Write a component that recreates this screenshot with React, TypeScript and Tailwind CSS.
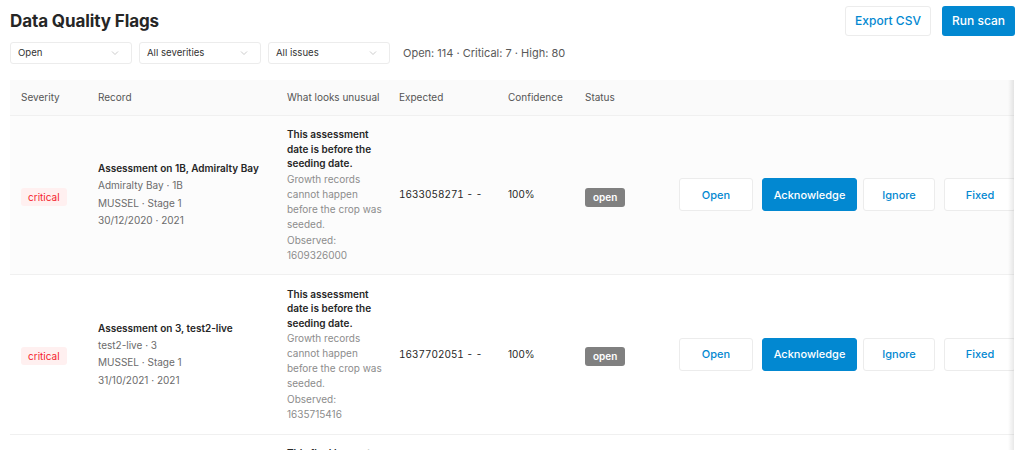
import React from "react";

type Flag = {
  title: string;
  site: string;
  stage: string;
  date: string;
  headline: string;
  detail: string;
  observed: string;
  expected: string;
  confidence: string;
  hovered?: boolean;
};

const flags: Flag[] = [
  {
    title: "Assessment on 1B, Admiralty Bay",
    site: "Admiralty Bay · 1B",
    stage: "MUSSEL · Stage 1",
    date: "30/12/2020 · 2021",
    headline: "This assessment date is before the seeding date.",
    detail: "Growth records cannot happen before the crop was seeded.",
    observed: "1609326000",
    expected: "1633058271 - -",
    confidence: "100%",
    hovered: true,
  },
  {
    title: "Assessment on 3, test2-live",
    site: "test2-live · 3",
    stage: "MUSSEL · Stage 1",
    date: "31/10/2021 · 2021",
    headline: "This assessment date is before the seeding date.",
    detail: "Growth records cannot happen before the crop was seeded.",
    observed: "1635715416",
    expected: "1637702051 - -",
    confidence: "100%",
  },
  {
    title: "Harvest on 2A, Admiralty Bay",
    site: "Admiralty Bay · 2A",
    stage: "MUSSEL · Stage 2",
    date: "14/03/2021 · 2021",
    headline: "This final harvest date is before the seeding date.",
    detail: "A harvest cannot happen before the crop was seeded.",
    observed: "1615633200",
    expected: "1633058271 - -",
    confidence: "100%",
  },
];

function Chevron() {
  return (
    <svg width="10" height="10" viewBox="0 0 10 10" fill="none" className="text-[#c4c4c4]">
      <path d="M2 3.5 5 6.5 8 3.5" stroke="currentColor" strokeWidth="0.9" />
    </svg>
  );
}

function Select({ label }: { label: string }) {
  return (
    <div className="flex h-[22px] w-[122px] items-center justify-between rounded-[3px] border border-[#ececec] bg-white pl-[7px] pr-[11px] text-[9.6px] text-[#333]">
      <span>{label}</span>
      <Chevron />
    </div>
  );
}

function ActionButton({ label, primary, cls }: { label: string; primary?: boolean; cls: string }) {
  return (
    <button
      className={
        primary
          ? `h-[33px] ${cls} rounded-[3px] border border-[#0288d1] bg-[#0288d1] text-[11px] font-medium text-white`
          : `h-[33px] ${cls} rounded-[3px] border border-[#ececec] bg-white text-[11px] font-medium text-[#0288d1]`
      }
    >
      {label}
    </button>
  );
}

export default function App() {
  return (
    <div className="min-h-[450px] bg-white px-[10px] text-[#262626]" style={{ fontFamily: "Inter, 'Noto Sans', sans-serif" }}>
      <div className="-mr-[1px] flex items-start justify-between pt-[6px]">
        <h1 className="mt-[3px] text-[17px] font-bold tracking-[-0.1px] text-[#262626]">Data Quality Flags</h1>
        <div className="flex gap-[11px]">
          <button className="h-[30px] w-[86px] rounded-[3px] border border-[#ececec] bg-white text-[12px] font-medium text-[#0288d1]">
            Export CSV
          </button>
          <button className="h-[30px] w-[73px] rounded-[3px] bg-[#0288d1] text-[12px] font-medium text-white">Run scan</button>
        </div>
      </div>

      <div className="mt-[6px] flex items-center gap-[7px]">
        <Select label="Open" />
        <Select label="All severities" />
        <Select label="All issues" />
        <span className="ml-[6px] text-[11px] text-[#595959]">Open: 114 · Critical: 7 · High: 80</span>
      </div>

      <div className="relative mt-[16px] w-[1004px] overflow-hidden">
        <table className="w-[1080px] table-fixed border-collapse text-left">
          <colgroup>
            <col className="w-[77px]" />
            <col className="w-[189px]" />
            <col className="w-[112px]" />
            <col className="w-[109px]" />
            <col className="w-[77px]" />
            <col className="w-[94px]" />
            <col className="w-[422px]" />
          </colgroup>
          <thead>
            <tr className="h-[35px] border-b border-[#f0f0f0] bg-[#fafafa] text-[10px] text-[#555]">
              <th className="pl-[11px] font-normal">Severity</th>
              <th className="pl-[11px] font-normal">Record</th>
              <th className="pl-[11px] font-normal">What looks unusual</th>
              <th className="pl-[11px] font-normal">Expected</th>
              <th className="pl-[11px] font-normal">Confidence</th>
              <th className="pl-[11px] font-normal">Status</th>
              <th className="pl-[11px] font-normal"></th>
            </tr>
          </thead>
          <tbody>
            {flags.map((f) => (
              <tr key={f.title} className={`border-b border-[#f0f0f0] ${f.hovered ? "bg-[#fcfcfc]" : "bg-white"}`}>
                <td className="pl-[11px] align-middle">
                  <span className="inline-block rounded-[3px] bg-[#fff0f0] px-[7px] py-[2px] text-[10px] leading-[14px] text-[#f5222d]">
                    critical
                  </span>
                </td>
                <td className="pl-[11px] align-middle">
                  <div className="text-[10px] font-semibold leading-[17px] text-[#262626]">{f.title}</div>
                  <div className="text-[10px] leading-[17.5px] text-[#6b6b6b]">{f.site}</div>
                  <div className="text-[10px] leading-[17.5px] text-[#6b6b6b]">{f.stage}</div>
                  <div className="text-[10px] leading-[17.5px] text-[#6b6b6b]">{f.date}</div>
                </td>
                <td className="py-[11.5px] pl-[11px] pr-[4px] align-middle">
                  <div className="text-[10px] font-semibold leading-[14.5px] text-[#262626]">{f.headline}</div>
                  <div className="mt-[1px] text-[10px] leading-[15px] text-[#8c8c8c]">{f.detail}</div>
                  <div className="mt-[1px] text-[10px] leading-[15px] text-[#8c8c8c]">
                    Observed: {f.observed}
                  </div>
                </td>
                <td className="pl-[11px] align-middle text-[10px] tabular-nums text-[#262626]">{f.expected}</td>
                <td className="pl-[11px] align-middle text-[10px] text-[#262626]">{f.confidence}</td>
                <td className="pl-[11px] align-middle">
                  <span className="inline-block rounded-[3px] bg-[#808080] px-[8px] py-[2px] text-[10px] font-semibold leading-[15px] text-white">
                    open
                  </span>
                </td>
                <td className="pl-[11px] align-middle">
                  <div className="flex">
                    <ActionButton label="Open" cls="w-[74px]" />
                    <ActionButton label="Acknowledge" primary cls="ml-[9px] w-[95px]" />
                    <ActionButton label="Ignore" cls="ml-[6px] w-[72px]" />
                    <ActionButton label="Fixed" cls="ml-[9px] w-[72px]" />
                  </div>
                </td>
              </tr>
            ))}
          </tbody>
        </table>
        <div className="pointer-events-none absolute inset-y-0 right-0 w-[6px] bg-gradient-to-r from-transparent to-[rgba(0,0,0,0.09)]" />
      </div>
    </div>
  );
}
